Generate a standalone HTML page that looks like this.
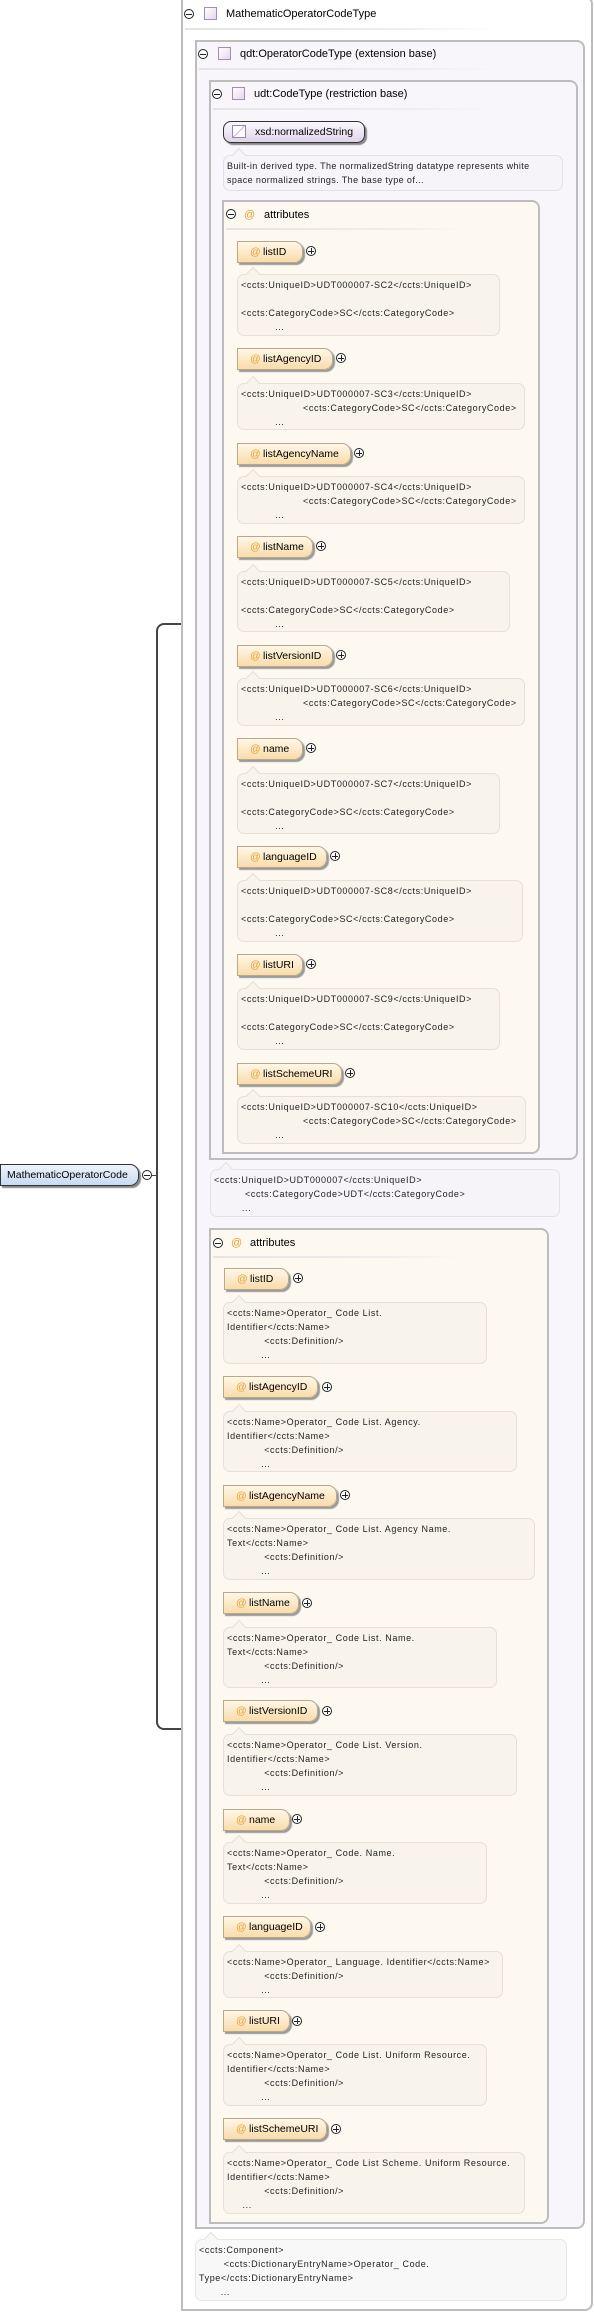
<!DOCTYPE html>
<html><head><meta charset="utf-8"><style>
*{margin:0;padding:0;box-sizing:border-box}
body{width:594px;height:2312px;position:relative;background:#fff;font-family:"Liberation Sans",sans-serif;color:#000;overflow:hidden}
.a{position:absolute}
.box{position:absolute;border:2px solid #bdbdbd;border-radius:0 8px 8px 0}
.t{position:absolute;font-size:11px;line-height:14px;white-space:nowrap}
.sep{position:absolute;height:2px;background:linear-gradient(90deg,#e4e4e4,#eee 70%,rgba(255,255,255,0))}
.mi,.pl{position:absolute;width:10px;height:10px;border:1px solid #222;border-radius:50%;background:#fff}
.mi:before,.pl:before{content:"";position:absolute;left:1px;top:3.5px;width:6px;height:1px;background:#222}
.pl:after{content:"";position:absolute;left:3.5px;top:1px;width:1px;height:6px;background:#222}
.sq{position:absolute;width:13px;height:13px;border:1px solid #a58bb5;background:linear-gradient(135deg,#fff,#e4d8ec)}
.at{position:absolute;color:#e8a030;font-size:11px;line-height:14px}
.pill{position:absolute;height:22px;border:1px solid #b9a98a;border-radius:0 9px 9px 0;background:linear-gradient(#fff7e8,#f9dcaa);box-shadow:2px 2px 1px #9a9a9a;font-size:10.5px;line-height:20px;white-space:nowrap}
.pill i{font-style:normal;color:#e8a030;position:absolute;left:12px}
.pill b{font-weight:normal;position:absolute;left:25px}
.doc{position:absolute;border:1px solid #e6e0d6;border-radius:7px;background:#f8f4ec;font-size:9px;line-height:14px;letter-spacing:.6px;padding:3px 0 0 3px;white-space:pre;color:#222}
.doc:before{content:"";position:absolute;left:10px;top:-6px;width:9px;height:9px;background:inherit;border-left:1px solid #e6e0d6;border-top:1px solid #e6e0d6;transform:rotate(45deg)}
.lv{background:#f6f4f8;border-color:#e4e0e8}
.wh{background:#f8f8f8;border-color:#e6e6e6}
</style></head><body>

<!-- bracket -->
<div class="a" style="left:156px;top:623px;width:53px;height:1107px;border:2px solid #444;border-right:none;border-radius:8px 0 0 8px"></div>

<!-- main element -->
<div class="a" style="left:0;top:1164px;width:139px;height:22px;border:1px solid #333;border-radius:0 9px 9px 0;background:linear-gradient(#eef4fc,#c8dbf2);box-shadow:2px 2px 1px #888;font-size:10.5px;line-height:20px;padding-left:6px">MathematicOperatorCode</div>
<div class="mi" style="left:142px;top:1170px"></div>
<div class="a" style="left:152px;top:1175px;width:5px;height:1px;background:#444"></div>

<!-- outer -->
<div class="box" style="left:181px;top:-4px;width:412px;height:2315px;background:#fff"></div>
<div class="mi" style="left:184px;top:9px"></div><div class="sq" style="left:204px;top:7px"></div>
<div class="t" style="left:226px;top:7px">MathematicOperatorCodeType</div>
<div class="sep" style="left:185px;top:28px;width:310px"></div>

<!-- qdt -->
<div class="box" style="left:195px;top:40px;width:390px;height:2189px;background:#f9f6fb"></div>
<div class="mi" style="left:198px;top:49px"></div><div class="sq" style="left:218px;top:47px"></div>
<div class="t" style="left:240px;top:47px">qdt:OperatorCodeType (extension base)</div>
<div class="sep" style="left:199px;top:68px;width:300px"></div>

<!-- udt -->
<div class="box" style="left:209px;top:80px;width:369px;height:1080px;background:#f9f6fb"></div>
<div class="mi" style="left:212px;top:89px"></div><div class="sq" style="left:232px;top:87px"></div>
<div class="t" style="left:254px;top:87px">udt:CodeType (restriction base)</div>
<div class="sep" style="left:213px;top:108px;width:280px"></div>

<div class="a" style="left:223px;top:121px;width:142px;height:22px;border:1px solid #333;border-radius:8px;background:linear-gradient(#fbf8fd,#e0d4ea);box-shadow:2px 2px 1px #888;font-size:10.5px;line-height:20px;padding-left:31px">xsd:normalizedString</div>
<div class="a" style="left:232px;top:125px;width:14px;height:13px;border:1px solid #9a84a8;background:linear-gradient(135deg,#fff 45%,#b9a5c6 50%,#fff 55%)"></div>
<div class="doc lv" style="left:223px;top:155px;width:340px;height:36px;letter-spacing:.4px">Built-in derived type. The normalizedString datatype represents white
space normalized strings. The base type of...</div>

<!-- attributes 1 -->
<div class="box" style="left:222px;top:200px;width:318px;height:954px;background:#fdf9f1"></div>
<div class="mi" style="left:226px;top:209px"></div><div class="at" style="left:244px;top:208px">@</div>
<div class="t" style="left:264px;top:208px">attributes</div>
<div class="sep" style="left:226px;top:228px;width:240px"></div>

<div class="pill" style="left:237px;top:241px;width:66px"><i>@</i><b>listID</b></div><div class="pl" style="left:306px;top:246px"></div>
<div class="doc" style="left:237px;top:274px;width:263px;height:62px">&lt;ccts:UniqueID&gt;UDT000007-SC2&lt;/ccts:UniqueID&gt;

&lt;ccts:CategoryCode&gt;SC&lt;/ccts:CategoryCode&gt;
           ...</div>

<div class="pill" style="left:237px;top:348px;width:96px"><i>@</i><b>listAgencyID</b></div><div class="pl" style="left:336px;top:353px"></div>
<div class="doc" style="left:237px;top:383px;width:288px;height:47px">&lt;ccts:UniqueID&gt;UDT000007-SC3&lt;/ccts:UniqueID&gt;
                    &lt;ccts:CategoryCode&gt;SC&lt;/ccts:CategoryCode&gt;
           ...</div>

<div class="pill" style="left:237px;top:443px;width:114px"><i>@</i><b>listAgencyName</b></div><div class="pl" style="left:354px;top:448px"></div>
<div class="doc" style="left:237px;top:476px;width:288px;height:48px">&lt;ccts:UniqueID&gt;UDT000007-SC4&lt;/ccts:UniqueID&gt;
                    &lt;ccts:CategoryCode&gt;SC&lt;/ccts:CategoryCode&gt;
           ...</div>

<div class="pill" style="left:237px;top:536px;width:76px"><i>@</i><b>listName</b></div><div class="pl" style="left:316px;top:541px"></div>
<div class="doc" style="left:237px;top:571px;width:273px;height:61px">&lt;ccts:UniqueID&gt;UDT000007-SC5&lt;/ccts:UniqueID&gt;

&lt;ccts:CategoryCode&gt;SC&lt;/ccts:CategoryCode&gt;
           ...</div>

<div class="pill" style="left:237px;top:645px;width:96px"><i>@</i><b>listVersionID</b></div><div class="pl" style="left:336px;top:650px"></div>
<div class="doc" style="left:237px;top:678px;width:288px;height:48px">&lt;ccts:UniqueID&gt;UDT000007-SC6&lt;/ccts:UniqueID&gt;
                    &lt;ccts:CategoryCode&gt;SC&lt;/ccts:CategoryCode&gt;
           ...</div>

<div class="pill" style="left:237px;top:738px;width:66px"><i>@</i><b>name</b></div><div class="pl" style="left:306px;top:743px"></div>
<div class="doc" style="left:237px;top:773px;width:263px;height:61px">&lt;ccts:UniqueID&gt;UDT000007-SC7&lt;/ccts:UniqueID&gt;

&lt;ccts:CategoryCode&gt;SC&lt;/ccts:CategoryCode&gt;
           ...</div>

<div class="pill" style="left:237px;top:846px;width:90px"><i>@</i><b>languageID</b></div><div class="pl" style="left:330px;top:851px"></div>
<div class="doc" style="left:237px;top:880px;width:286px;height:62px">&lt;ccts:UniqueID&gt;UDT000007-SC8&lt;/ccts:UniqueID&gt;

&lt;ccts:CategoryCode&gt;SC&lt;/ccts:CategoryCode&gt;
           ...</div>

<div class="pill" style="left:237px;top:954px;width:66px"><i>@</i><b>listURI</b></div><div class="pl" style="left:306px;top:959px"></div>
<div class="doc" style="left:237px;top:988px;width:263px;height:62px">&lt;ccts:UniqueID&gt;UDT000007-SC9&lt;/ccts:UniqueID&gt;

&lt;ccts:CategoryCode&gt;SC&lt;/ccts:CategoryCode&gt;
           ...</div>

<div class="pill" style="left:237px;top:1063px;width:105px"><i>@</i><b>listSchemeURI</b></div><div class="pl" style="left:345px;top:1068px"></div>
<div class="doc" style="left:237px;top:1096px;width:289px;height:48px">&lt;ccts:UniqueID&gt;UDT000007-SC10&lt;/ccts:UniqueID&gt;
                    &lt;ccts:CategoryCode&gt;SC&lt;/ccts:CategoryCode&gt;
           ...</div>

<!-- udt doc -->
<div class="doc lv" style="left:210px;top:1169px;width:350px;height:48px">&lt;ccts:UniqueID&gt;UDT000007&lt;/ccts:UniqueID&gt;
          &lt;ccts:CategoryCode&gt;UDT&lt;/ccts:CategoryCode&gt;
         ...</div>

<!-- attributes 2 -->
<div class="box" style="left:209px;top:1228px;width:340px;height:996px;background:#fdf9f1"></div>
<div class="mi" style="left:213px;top:1238px"></div><div class="at" style="left:231px;top:1236px">@</div>
<div class="t" style="left:250px;top:1236px">attributes</div>
<div class="sep" style="left:213px;top:1256px;width:250px"></div>

<div class="pill" style="left:224px;top:1268px;width:65px"><i>@</i><b>listID</b></div><div class="pl" style="left:293px;top:1273px"></div>
<div class="doc" style="left:223px;top:1302px;width:264px;height:62px">&lt;ccts:Name&gt;Operator_ Code List.
Identifier&lt;/ccts:Name&gt;
            &lt;ccts:Definition/&gt;
           ...</div>

<div class="pill" style="left:223px;top:1376px;width:95px"><i>@</i><b>listAgencyID</b></div><div class="pl" style="left:322px;top:1382px"></div>
<div class="doc" style="left:223px;top:1411px;width:294px;height:61px">&lt;ccts:Name&gt;Operator_ Code List. Agency.
Identifier&lt;/ccts:Name&gt;
            &lt;ccts:Definition/&gt;
           ...</div>

<div class="pill" style="left:223px;top:1485px;width:114px"><i>@</i><b>listAgencyName</b></div><div class="pl" style="left:340px;top:1490px"></div>
<div class="doc" style="left:223px;top:1518px;width:312px;height:62px">&lt;ccts:Name&gt;Operator_ Code List. Agency Name.
Text&lt;/ccts:Name&gt;
            &lt;ccts:Definition/&gt;
           ...</div>

<div class="pill" style="left:223px;top:1592px;width:76px"><i>@</i><b>listName</b></div><div class="pl" style="left:302px;top:1598px"></div>
<div class="doc" style="left:223px;top:1627px;width:274px;height:61px">&lt;ccts:Name&gt;Operator_ Code List. Name.
Text&lt;/ccts:Name&gt;
            &lt;ccts:Definition/&gt;
           ...</div>

<div class="pill" style="left:223px;top:1700px;width:95px"><i>@</i><b>listVersionID</b></div><div class="pl" style="left:322px;top:1706px"></div>
<div class="doc" style="left:223px;top:1734px;width:294px;height:62px">&lt;ccts:Name&gt;Operator_ Code List. Version.
Identifier&lt;/ccts:Name&gt;
            &lt;ccts:Definition/&gt;
           ...</div>

<div class="pill" style="left:223px;top:1809px;width:67px"><i>@</i><b>name</b></div><div class="pl" style="left:292px;top:1814px"></div>
<div class="doc" style="left:223px;top:1842px;width:264px;height:62px">&lt;ccts:Name&gt;Operator_ Code. Name.
Text&lt;/ccts:Name&gt;
            &lt;ccts:Definition/&gt;
           ...</div>

<div class="pill" style="left:223px;top:1916px;width:88px"><i>@</i><b>languageID</b></div><div class="pl" style="left:315px;top:1922px"></div>
<div class="doc" style="left:223px;top:1951px;width:280px;height:47px">&lt;ccts:Name&gt;Operator_ Language. Identifier&lt;/ccts:Name&gt;
            &lt;ccts:Definition/&gt;
           ...</div>

<div class="pill" style="left:223px;top:2010px;width:67px"><i>@</i><b>listURI</b></div><div class="pl" style="left:292px;top:2016px"></div>
<div class="doc" style="left:223px;top:2044px;width:264px;height:62px">&lt;ccts:Name&gt;Operator_ Code List. Uniform Resource.
Identifier&lt;/ccts:Name&gt;
            &lt;ccts:Definition/&gt;
           ...</div>

<div class="pill" style="left:223px;top:2118px;width:104px"><i>@</i><b>listSchemeURI</b></div><div class="pl" style="left:331px;top:2124px"></div>
<div class="doc" style="left:223px;top:2152px;width:302px;height:62px">&lt;ccts:Name&gt;Operator_ Code List Scheme. Uniform Resource.
Identifier&lt;/ccts:Name&gt;
            &lt;ccts:Definition/&gt;
     ...</div>

<!-- component doc -->
<div class="doc wh" style="left:195px;top:2239px;width:372px;height:62px">&lt;ccts:Component&gt;
        &lt;ccts:DictionaryEntryName&gt;Operator_ Code.
Type&lt;/ccts:DictionaryEntryName&gt;
       ...</div>

</body></html>
